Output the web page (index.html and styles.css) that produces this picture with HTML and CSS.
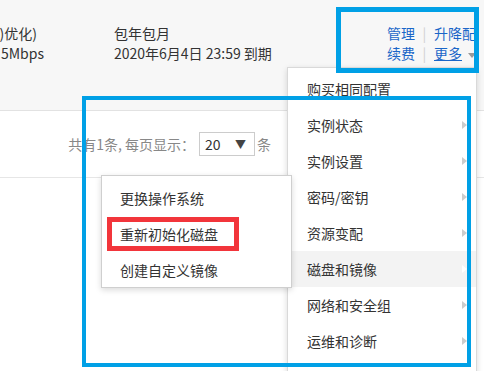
FILE: index.html
```html
<!doctype html>
<html>
<head>
    <meta charset="utf-8">
    <title>实例列表</title>
    <link rel="stylesheet" href="styles.css">
</head>
<body>
<div class="page">
    <!-- instance row (hovered) -->
    <div class="row row-hover">
        <div class="cell spec">
            <p class="spec-first">(BGP(多线)优化)</p>
            <p>带宽: 5Mbps</p>
        </div>
        <div class="cell billing">
            <p>包年包月</p>
            <p>2020年6月4日 23:59 到期</p>
        </div>
        <div class="cell actions">
            <a class="act">管理</a><span class="sep">|</span><a class="act">升降配</a>
            <a class="act">续费</a><span class="sep">|</span><a class="act more"><u>更多</u><i class="caret"></i></a>
        </div>
    </div>

    <div class="pager">
        共有1条, 每页显示：
        <span class="pager-select"><span>20</span><span class="pager-arrow">▼</span></span>
        <span class="pager-unit">条</span>
    </div>
</div>

<!-- "更多" dropdown -->
<ul class="menu">
    <li>购买相同配置</li>
    <li class="has-sub">实例状态</li>
    <li class="has-sub">实例设置</li>
    <li class="has-sub">密码/密钥</li>
    <li class="has-sub">资源变配</li>
    <li class="has-sub active">磁盘和镜像</li>
    <li class="has-sub">网络和安全组</li>
    <li class="has-sub">运维和诊断</li>
</ul>

<ul class="submenu">
    <li>更换操作系统</li>
    <li>重新初始化磁盘</li>
    <li>创建自定义镜像</li>
</ul>

<!-- annotation boxes -->
<div class="mark mark-actions"></div>
<div class="mark mark-menu"></div>
<div class="mark mark-red"></div>
</body>
</html>
```

FILE: styles.css
```css
html, body {
    margin: 0;
    padding: 0;
}

body {
    width: 484px;
    height: 371px;
    overflow: hidden;
    position: relative;
    font-family: "Noto Sans CJK SC", sans-serif;
    font-size: 14px;
    color: #333;
    background: #fff;
}

p {
    margin: 0;
}

/* table row */
.row {
    display: flex;
    height: 110px;
    border-bottom: 1px solid #e2e2e2;
    box-sizing: content-box;
}

.row-hover {
    background: #f7f7f7;
}

.cell {
    padding-top: 23px;
    line-height: 20px;
    white-space: nowrap;
}

/* first column is scrolled off to the left */
.spec {
    width: 44px;
    flex: none;
    display: flex;
    flex-direction: column;
    align-items: flex-end;
}

.spec-first {
    padding-right: 7px;
}

.billing {
    margin-left: 70px;
}

.actions {
    margin-left: auto;
    margin-right: 8px;
    display: grid;
    grid-template-columns: 30px 19px auto;
    align-content: start;
}

.act {
    color: #1a66c8;
    cursor: pointer;
}

.actions .act:nth-child(3n+1) {
    justify-self: end;
}

.sep {
    color: #d0d0d0;
    text-align: center;
}

.more u {
    text-decoration-color: #1a66c8;
}

.caret {
    display: inline-block;
    margin-left: 6px;
    vertical-align: middle;
    border-top: 5px solid #999;
    border-left: 4px solid transparent;
    border-right: 4px solid transparent;
}

/* pagination */
.pager {
    height: 66px;
    display: flex;
    align-items: center;
    justify-content: flex-end;
    padding-right: 213px;
    border-bottom: 1px solid #e6e6e6;
    color: #888;
    white-space: nowrap;
}

.pager-select {
    display: flex;
    align-items: center;
    justify-content: space-between;
    width: 56px;
    height: 24px;
    box-sizing: border-box;
    margin-left: 4px;
    padding: 0 8px 0 5px;
    border: 1px solid #ccc;
    background: #fff;
    color: #333;
}

.pager-arrow {
    font-size: 11px;
    color: #444;
}

.pager-unit {
    margin-left: 2px;
}

/* dropdown menus */
.menu, .submenu {
    position: absolute;
    margin: 0;
    list-style: none;
    background: #fff;
    border: 1px solid #d9d9d9;
    box-shadow: 0 2px 6px rgba(0, 0, 0, 0.15);
    box-sizing: border-box;
}

.menu {
    left: 287px;
    top: 67px;
    width: 190px;
    height: 320px;
    padding: 3px 0 0;
}

.menu li, .submenu li {
    position: relative;
    height: 36px;
    line-height: 36px;
    white-space: nowrap;
}

.menu li {
    padding-left: 19px;
}

.menu .active {
    background: #f3f3f3;
}

.has-sub::after {
    content: "";
    position: absolute;
    right: 9px;
    top: 14px;
    border-left: 5px solid #ccc;
    border-top: 4px solid transparent;
    border-bottom: 4px solid transparent;
}

.menu .active::after {
    border-left-color: #fff;
}

.submenu {
    left: 101px;
    top: 175px;
    width: 191px;
    height: 113px;
    padding: 4px 0 0;
    border-color: #cfcfcf;
}

.submenu li {
    padding-left: 18px;
}

/* annotation frames */
.mark {
    position: absolute;
    box-sizing: border-box;
    pointer-events: none;
}

.mark-actions {
    left: 336px;
    top: 7px;
    width: 143px;
    height: 66px;
    border: 5px solid #00a0e6;
}

.mark-menu {
    left: 82px;
    top: 96px;
    width: 389px;
    height: 271px;
    border: 4px solid #00a0e6;
}

.mark-red {
    left: 107px;
    top: 217px;
    width: 132px;
    height: 34px;
    border: 5px solid #f2353b;
}
```
